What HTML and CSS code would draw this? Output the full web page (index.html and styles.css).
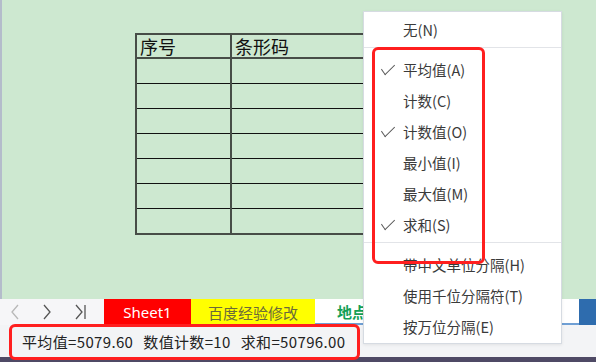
FILE: index.html
```html
<!DOCTYPE html>
<html lang="zh-CN">

<head>
    <meta charset="UTF-8">
    <title>状态栏统计</title>
    <link rel="stylesheet" href="styles.css">
</head>

<body>
    <div class="app">

        <!-- Sheet Area -->
        <div class="sheet">
            <table class="grid">
                <tr class="head-row"><td class="col-a">序号</td><td class="col-b">条形码</td></tr>
                <tr><td></td><td></td></tr>
                <tr><td></td><td></td></tr>
                <tr><td></td><td></td></tr>
                <tr><td></td><td></td></tr>
                <tr><td></td><td></td></tr>
                <tr><td></td><td></td></tr>
                <tr><td></td><td></td></tr>
            </table>
        </div>

        <!-- Sheet Tabs -->
        <div class="tabs">
            <div class="nav">
                <svg class="nav-btn off" width="10" height="16" viewBox="0 0 10 16"><polyline points="8,1 2,8 8,15" /></svg>
                <svg class="nav-btn" width="10" height="16" viewBox="0 0 10 16"><polyline points="2,1 8,8 2,15" /></svg>
                <svg class="nav-btn" width="12" height="16" viewBox="0 0 12 16"><polyline points="2,1 8,8 2,15" /><line x1="11" y1="1" x2="11" y2="15" /></svg>
            </div>
            <div class="tab tab-red">Sheet1</div>
            <div class="tab tab-yellow">百度经验修改</div>
            <div class="tab tab-active">地点</div>
            <div class="tab tab-blue"></div>
        </div>

        <!-- Status Bar -->
        <div class="status">
            <span>平均值=5079.60</span>
            <span>数值计数=10</span>
            <span>求和=50796.00</span>
        </div>

        <div class="taskbar"></div>

        <!-- Context Menu -->
        <div class="menu">
            <div class="item">无(N)</div>
            <div class="sep"></div>
            <div class="item checked">平均值(A)</div>
            <div class="item">计数(C)</div>
            <div class="item checked">计数值(O)</div>
            <div class="item">最小值(I)</div>
            <div class="item">最大值(M)</div>
            <div class="item checked">求和(S)</div>
            <div class="sep"></div>
            <div class="item">带中文单位分隔(H)</div>
            <div class="item">使用千位分隔符(T)</div>
            <div class="item">按万位分隔(E)</div>
        </div>

        <!-- Highlight Boxes -->
        <div class="mark mark-menu"></div>
        <div class="mark mark-status"></div>

    </div>
</body>

</html>
```

FILE: styles.css
```css
/* Global Styles */
body {
    margin: 0;
    font-family: "Microsoft YaHei", "Noto Sans CJK SC", "Noto Sans", sans-serif;
    color: #333;
}

.app {
    position: relative;
    width: 596px;
    height: 362px;
    overflow: hidden;
    display: flex;
    flex-direction: column;
    background: #f3f4f6;
}

/* Sheet Area */
.sheet {
    height: 299px;
    flex-shrink: 0;
    box-sizing: border-box;
    background: #cde8d0;
    border-left: 2px solid #b4bccb;
    padding: 33px 0 0 133px;
}

.grid {
    border-collapse: collapse;
    border: 2px solid #474d47;
}

.grid td {
    height: 24px;
    padding: 0 0 0 3px;
    border-top: 1px solid #111;
    border-right: 2px solid #474d47;
    vertical-align: bottom;
    font-size: 18px;
    line-height: 22px;
    color: #111;
}

.grid .head-row td {
    height: 22px;
    border-bottom: 2px solid #474d47;
}

.col-a {
    width: 90px;
}

.col-b {
    width: 150px;
}

/* Sheet Tabs */
.tabs {
    height: 26px;
    flex-shrink: 0;
    display: flex;
    background: #fff;
}

.nav {
    width: 104px;
    display: flex;
    align-items: center;
    gap: 22px;
    padding-left: 10px;
    box-sizing: border-box;
    background: #f6f6f8;
}

.nav-btn polyline,
.nav-btn line {
    fill: none;
    stroke: #555;
    stroke-width: 1.3;
}

.nav-btn.off polyline {
    stroke: #b8b8b8;
}

.tab {
    display: flex;
    align-items: center;
    justify-content: center;
    font-size: 15px;
}

.tab-red {
    width: 87px;
    background: #ff0000;
    color: #fff;
    font-family: "Microsoft YaHei", "Noto Sans", "Noto Sans CJK SC", sans-serif;
}

.tab-yellow {
    width: 124px;
    background: #ffff00;
    color: #6b6a3a;
}

.tab-active {
    width: 264px;
    justify-content: flex-start;
    padding-left: 22px;
    box-sizing: border-box;
    color: #12a056;
    font-weight: bold;
    border-bottom: 2px solid #6f9fd4;
}

.tab-blue {
    flex: 1;
    background: #2e6cae;
}

/* Status Bar */
.status {
    height: 32px;
    flex-shrink: 0;
    display: flex;
    align-items: center;
    gap: 10px;
    padding-left: 22px;
    font-size: 15px;
    letter-spacing: 0.35px;
    color: #222;
    background: #f3f4f6;
}

.taskbar {
    flex: 1;
    background: #4f4a65;
}

/* Context Menu */
.menu {
    position: absolute;
    left: 363px;
    top: 11px;
    width: 197px;
    padding: 2px 0 1px;
    background: #fff;
    border: 1px solid #d6dbe2;
    box-shadow: 0 1px 3px rgba(0, 0, 0, 0.08);
}

.item {
    position: relative;
    height: 31px;
    line-height: 31px;
    padding-left: 39px;
    font-size: 14.5px;
    color: #3a3a3a;
}

.item.checked::before {
    content: "";
    position: absolute;
    left: 17px;
    top: 10px;
    width: 13px;
    height: 6px;
    border-left: 1.3px solid #555;
    border-bottom: 1.3px solid #555;
    transform: rotate(-45deg) skewX(-10deg);
}

.sep {
    height: 1px;
    margin: 2px 0 6px;
    background: #e2e4e8;
}

/* Highlight Boxes */
.mark {
    position: absolute;
    border: 3px solid #ff1f1f;
    border-radius: 6px;
}

.mark-menu {
    left: 372px;
    top: 47px;
    width: 107px;
    height: 211px;
}

.mark-status {
    left: 9px;
    top: 324px;
    width: 345px;
    height: 30px;
}
```
